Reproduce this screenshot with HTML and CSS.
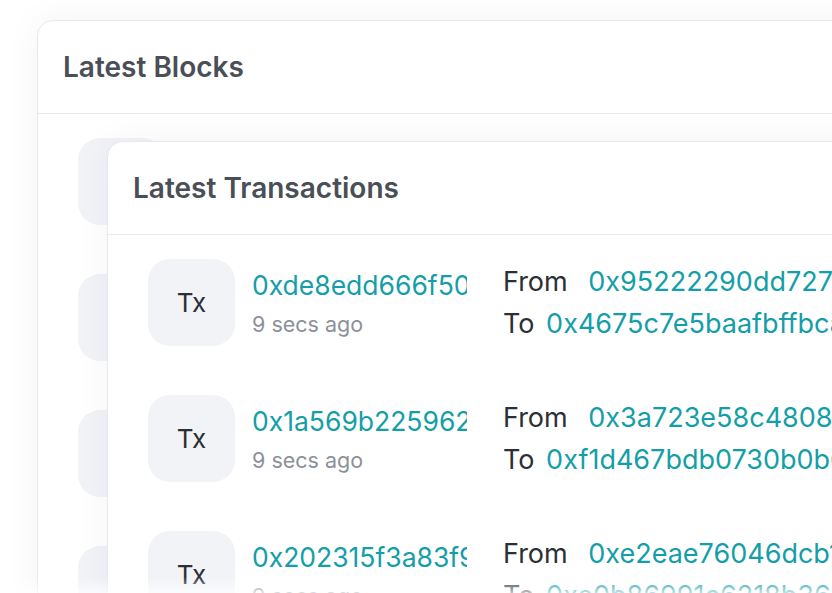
FILE: index.html
```html
<!DOCTYPE html>
<html lang="en">

<head>
    <meta charset="UTF-8">
    <meta name="viewport" content="width=device-width, initial-scale=1.0">
    <title>Explorer</title>
    <link rel="stylesheet" href="styles.css">
</head>

<body>
    <div class="stage">
        <section class="card card-blocks">
            <header class="card-head">Latest Blocks</header>
            <div class="card-body">
                <div class="row"><div class="badge"></div></div>
                <div class="row"><div class="badge"></div></div>
                <div class="row"><div class="badge"></div></div>
                <div class="row"><div class="badge"></div></div>
            </div>

            <!-- transactions card sits over the blocks card -->
            <section class="card card-txs">
                <header class="card-head">Latest Transactions</header>
                <div class="card-body">
                    <div class="row">
                        <div class="badge">Tx</div>
                        <div class="tx-main">
                            <a class="hash" href="#">0xde8edd666f50c3b8a2e1</a>
                            <span class="age">9 secs ago</span>
                        </div>
                        <div class="tx-parties">
                            <p><span class="label">From</span> <a class="addr from" href="#">0x95222290dd7278aa3ddd389</a></p>
                            <p><span class="label">To</span> <a class="addr" href="#">0x4675c7e5baafbffbca748158</a></p>
                        </div>
                    </div>
                    <div class="row">
                        <div class="badge">Tx</div>
                        <div class="tx-main">
                            <a class="hash" href="#">0x1a569b22596233c1e4</a>
                            <span class="age">9 secs ago</span>
                        </div>
                        <div class="tx-parties">
                            <p><span class="label">From</span> <a class="addr from" href="#">0x3a723e58c48084b2f9</a></p>
                            <p><span class="label">To</span> <a class="addr" href="#">0xf1d467bdb0730b0b6e2c</a></p>
                        </div>
                    </div>
                    <div class="row">
                        <div class="badge">Tx</div>
                        <div class="tx-main">
                            <a class="hash" href="#">0x202315f3a83f9e0c71</a>
                            <span class="age">9 secs ago</span>
                        </div>
                        <div class="tx-parties">
                            <p><span class="label">From</span> <a class="addr from" href="#">0xe2eae76046dcb11a08</a></p>
                            <p><span class="label">To</span> <a class="addr" href="#">0xe0b86991c6218b36c1d1</a></p>
                        </div>
                    </div>
                </div>
            </section>
        </section>
        <div class="fade"></div>
    </div>
</body>

</html>
```

FILE: styles.css
```css
:root {
    --border: #e7e9f1;
    --text: #4a4f57;
    --dark: #2b2f36;
    --muted: #8b9099;
    --teal: #149ea8;
    --badge-bg: #f1f3f7;
}

html,
body {
    margin: 0;
    padding: 0;
    overflow: hidden;
    background: #ffffff;
}

body {
    font-family: Inter, "Noto Sans", sans-serif;
    color: var(--text);
}

.stage {
    position: relative;
    height: 593px;
    padding: 20px 0 0 37px;
    box-sizing: border-box;
    overflow: hidden;
}

.card {
    background: #ffffff;
    border: 1px solid var(--border);
    border-radius: 16px;
    width: 900px;
    height: 900px;
    box-sizing: border-box;
    box-shadow: 0 0 36px rgba(30, 40, 80, 0.05);
}

.card-blocks {
    position: relative;
}

.card-txs {
    position: absolute;
    left: 69px;
    top: 120px;
}

.card-head {
    height: 92px;
    display: flex;
    align-items: center;
    padding: 0 25px;
    font-size: 28px;
    font-weight: 600;
    border-bottom: 1px solid var(--border);
}

.card-body {
    display: flex;
    flex-direction: column;
    gap: 49px;
    padding: 25px 40px;
}

.card-blocks .card-body {
    padding-top: 24px;
}

.row {
    display: flex;
    align-items: center;
    height: 87px;
}

.badge {
    flex: none;
    width: 87px;
    height: 87px;
    border-radius: 22px;
    background: var(--badge-bg);
    display: flex;
    align-items: center;
    justify-content: center;
    font-size: 26px;
    color: var(--dark);
}

.tx-main {
    flex: none;
    display: flex;
    flex-direction: column;
    align-self: flex-start;
    width: 215px;
    margin-left: 17px;
    padding-top: 7px;
    overflow: hidden;
}

.hash {
    font-size: 26.5px;
    line-height: 38px;
    color: var(--teal);
    text-decoration: none;
    white-space: nowrap;
}

.age {
    margin-top: 2px;
    font-size: 21.5px;
    line-height: 36px;
    color: var(--muted);
}

.tx-parties {
    min-width: 0;
    margin-left: 36px;
    white-space: nowrap;
}

.tx-parties p {
    margin: 0;
    font-size: 27px;
    line-height: 42px;
}

.label {
    color: var(--dark);
}

.addr {
    color: var(--teal);
    text-decoration: none;
    margin-left: 4px;
}

.addr.from {
    margin-left: 13px;
}

.fade {
    position: absolute;
    left: 0;
    right: 0;
    bottom: 0;
    height: 16px;
    background: linear-gradient(rgba(255, 255, 255, 0), rgba(255, 255, 255, 0.7));
}
```
